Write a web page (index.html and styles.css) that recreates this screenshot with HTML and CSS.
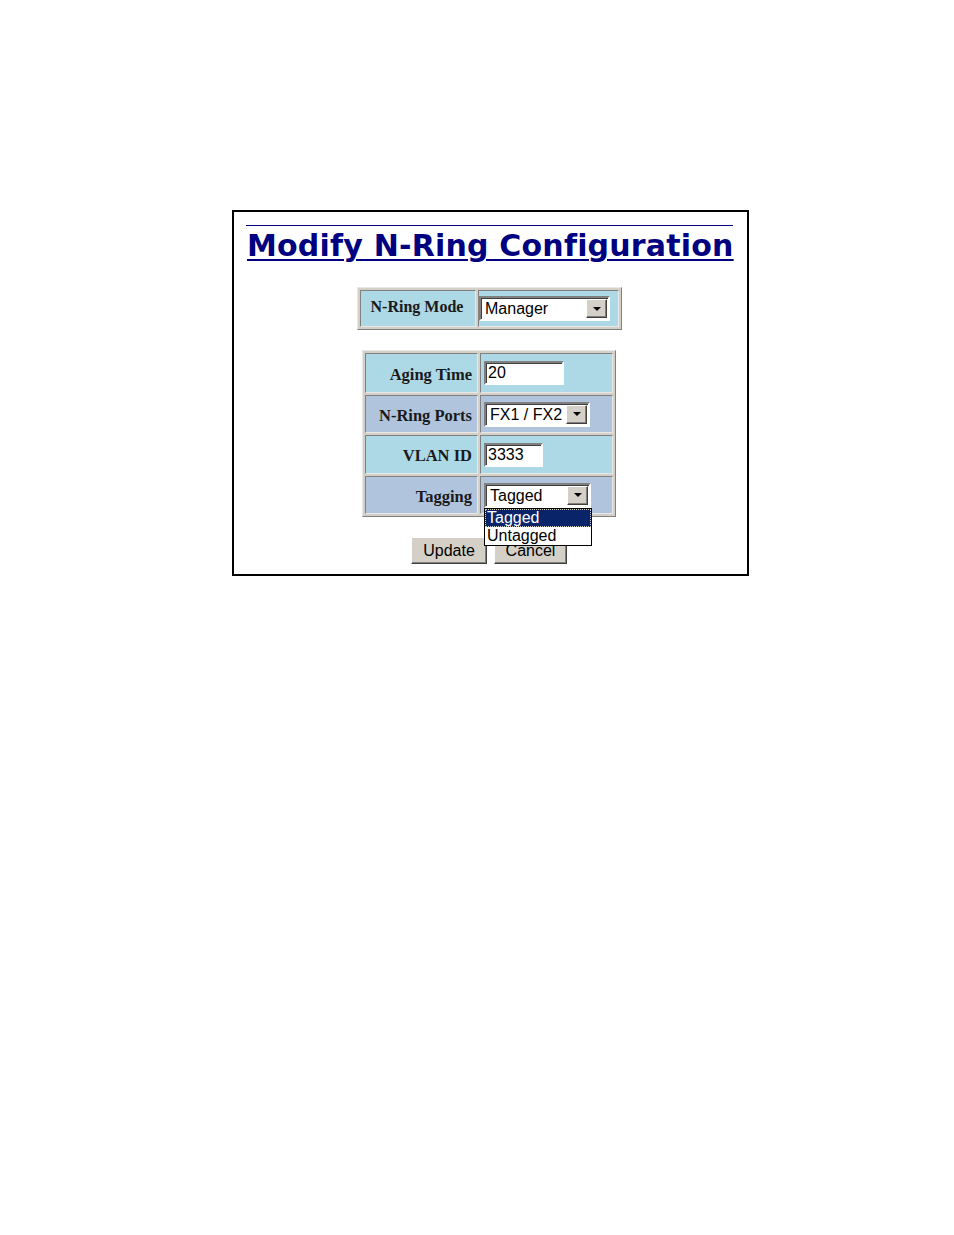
FILE: index.html
```html
<!DOCTYPE html>
<html>
<head>
<meta charset="utf-8">
<link rel="stylesheet" href="styles.css">
</head>
<body>
<div class="page">
  <div class="frame">
    <div class="rule"></div>
    <h1 class="title">Modify N-Ring Configuration</h1>
    <table class="tbl mode">
      <tr>
        <td class="lab blue">N-Ring Mode</td>
        <td class="val blue">
          <div class="sel sel-mode"><span class="txt">Manager</span><span class="arrow"><span class="tri"></span></span></div>
        </td>
      </tr>
    </table>
    <table class="tbl cfg">
      <tr class="r1">
        <td class="lab blue">Aging Time</td>
        <td class="val blue"><div class="inp inp-age">20</div></td>
      </tr>
      <tr class="r2">
        <td class="lab steel">N-Ring Ports</td>
        <td class="val steel"><div class="sel sel-ports"><span class="txt">FX1 / FX2</span><span class="arrow"><span class="tri"></span></span></div></td>
      </tr>
      <tr class="r3">
        <td class="lab blue">VLAN ID</td>
        <td class="val blue"><div class="inp inp-vlan">3333</div></td>
      </tr>
      <tr class="r4">
        <td class="lab steel">Tagging</td>
        <td class="val steel">
          <div class="dropwrap">
            <div class="sel sel-tag"><span class="txt">Tagged</span><span class="arrow"><span class="tri"></span></span></div>
            <div class="droplist">
              <div class="opt hi">Tagged</div>
              <div class="opt">Untagged</div>
            </div>
          </div>
        </td>
      </tr>
    </table>
    <div class="btns">
      <div class="btn b-upd">Update</div>
      <div class="btn b-can">Cancel</div>
    </div>
  </div>
</div>
</body>
</html>
```
FILE: styles.css
```css
html, body { margin: 0; padding: 0; background: #fff; }
.page { padding: 210px 0 0 232px; height: 1025px; }
.frame {
  width: 513px; height: 362px;
  border: 2px solid #000;
  box-sizing: content-box;
  position: relative;
}
.rule { margin: 13px 0 0 12px; width: 487px; height: 1px; background: #000080; }
.title {
  margin: 2px 0 0 13px;
  font-family: "DejaVu Sans", Verdana, sans-serif;
  font-weight: bold;
  font-size: 30px;
  line-height: 36px;
  color: #000080;
  text-decoration: underline;
  text-decoration-thickness: 2px;
  text-underline-offset: 3px;
  white-space: nowrap;
  letter-spacing: 0.2px;
}
.tbl {
  border-collapse: separate;
  border-spacing: 2px;
  border: 1px solid;
  border-color: #e8e8e8 #808080 #808080 #e8e8e8;
  background: #d4d0c8;
}
.tbl td {
  border: 1px solid;
  border-color: #808080 #e8e8e8 #e8e8e8 #808080;
  padding: 0;
}
.blue { background: #add8e6; }
.steel { background: #b0c4de; }
.lab {
  font-family: "Liberation Serif", "Times New Roman", serif;
  font-weight: bold;
  font-size: 16.5px;
  color: #1a1a1a;
  text-align: right;
  padding-right: 6px !important;
  white-space: nowrap;
}
.mode { margin: 23px 0 0 123px; width: 265px; height: 43px; }
.mode .lab { width: 108px; font-size: 16px; text-align: center; padding: 0 4px 4px 2px !important; vertical-align: middle; }
.mode .val { padding-left: 0 !important; vertical-align: middle; }
.cfg { margin: 20px 0 0 128px; width: 254px; }
.cfg .lab { width: 106px; padding-right: 5px !important; padding-top: 3px !important; }
.cfg .val { padding-left: 3px !important; }
.cfg tr.r1 td { height: 35px; }
.cfg tr.r2 td { height: 33px; }
.cfg tr.r3 td { height: 34px; }
.cfg tr.r4 td { height: 33px; }

.sel, .inp {
  box-sizing: border-box;
  background: #fff;
  border: 2px solid;
  border-color: #808080 #fff #fff #808080;
  box-shadow: inset 1px 1px 0 #404040;
  font-family: "Liberation Sans", Arial, sans-serif;
  font-size: 16px;
  color: #000;
  position: relative;
}
.inp { height: 24px; line-height: 20px; padding-left: 2px; }
.inp-age { width: 80px; }
.inp-vlan { width: 59px; }
.sel { height: 25px; line-height: 21px; display: flex; }
.sel .txt { flex: 1; padding-left: 4px; white-space: nowrap; overflow: hidden; }
.sel .arrow {
  width: 21px; margin: 1px 1px 1px 0;
  background: #d4d0c8;
  border: 1px solid; border-color: #fff #404040 #404040 #fff;
  box-sizing: border-box;
  box-shadow: inset -1px -1px 0 #808080;
  display: flex; align-items: center; justify-content: center;
}
.tri { width: 0; height: 0; border-left: 4px solid transparent; border-right: 4px solid transparent; border-top: 4px solid #000; }
.sel-mode { width: 131px; }
.sel-ports { width: 106px; }
.sel-tag { width: 107px; }
.dropwrap { position: relative; width: 108px; top: 0; }
.droplist {
  position: absolute; left: 0; top: 25px;
  width: 108px; box-sizing: border-box;
  border: 1px solid #000;
  background: #fff;
  font-family: "Liberation Sans", Arial, sans-serif;
  font-size: 16px;
  z-index: 5;
  padding: 0;
}
.opt { height: 18px; line-height: 18px; padding-left: 2px; color: #000; }
.opt.hi { background: #0a246a; color: #fff; outline: 1px dotted #d4d0c8; outline-offset: -1px; }

.btns { display: flex; gap: 7px; margin: 20px 0 0 177px; }
.btn {
  box-sizing: border-box;
  height: 27px;
  background: #d4d0c8;
  border: 1px solid; border-color: #fff #404040 #404040 #fff;
  box-shadow: inset -1px -1px 0 #808080;
  font-family: "Liberation Sans", Arial, sans-serif;
  font-size: 16px; line-height: 25px;
  text-align: center;
  color: #000;
}
.b-upd { width: 76px; }
.b-can { width: 73px; }
```
